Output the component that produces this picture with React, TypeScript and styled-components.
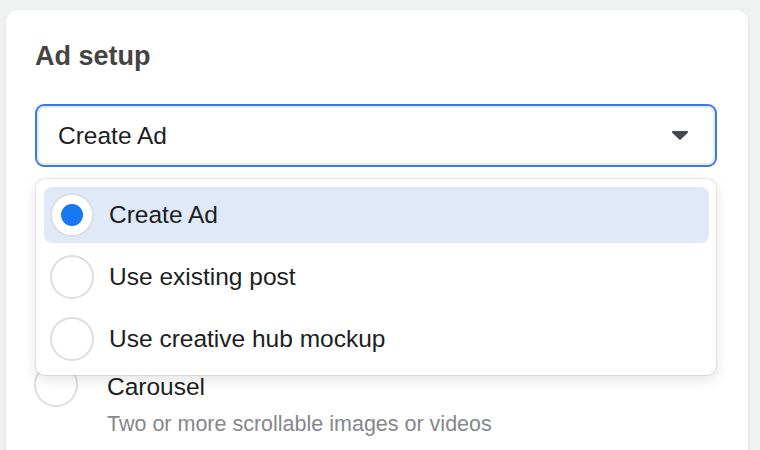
import React, { useState } from 'react';
import styled, { createGlobalStyle } from 'styled-components';

const GlobalStyle = createGlobalStyle`
    html, body {
        margin: 0;
        padding: 0;
        background: #f0f2f2;
        font-family: "Liberation Sans", Arial, sans-serif;
        overflow: hidden;
    }
`;

const SETUP_OPTIONS = ['Create Ad', 'Use existing post', 'Use creative hub mockup'];

export default function App() {
    const [selected, setSelected] = useState<string>('Create Ad');

    return (
        <>
            <GlobalStyle />
            <Page>
                <Card>
                    <Heading>Ad setup</Heading>
                    <SelectWrap>
                        <SelectBox>
                            <span>{selected}</span>
                            <Caret viewBox="0 0 16 9">
                                <path d="M1.2 0h13.6c1 0 1.5 1.2.8 1.9L8.8 8.5c-.45.45-1.15.45-1.6 0L.4 1.9C-.3 1.2.2 0 1.2 0z" />
                            </Caret>
                        </SelectBox>
                        <Menu>
                            {SETUP_OPTIONS.map((opt) => (
                                <MenuItem
                                    key={opt}
                                    active={opt === selected}
                                    onClick={() => setSelected(opt)}
                                >
                                    <Radio checked={opt === selected} />
                                    <span>{opt}</span>
                                </MenuItem>
                            ))}
                        </Menu>
                    </SelectWrap>

                    {/* format options sit under the open menu */}
                    <FormatSection>
                        <OptionRow>
                            <Radio checked={false} />
                            <OptionText>
                                <OptionTitle>Carousel</OptionTitle>
                                <OptionDesc>Two or more scrollable images or videos</OptionDesc>
                            </OptionText>
                        </OptionRow>
                    </FormatSection>
                </Card>
            </Page>
        </>
    );
}

const Page = styled.div`
    padding: 10px 12px 0 6px;
    height: 450px;
    box-sizing: border-box;
`;

const Card = styled.div`
    background: #ffffff;
    border-radius: 12px;
    box-shadow: 0 1px 3px rgba(0, 0, 0, 0.1);
    padding: 30px 31px 40px 29px;
    min-height: 500px;
    box-sizing: border-box;
`;

const Heading = styled.h2`
    margin: 0 0 32px;
    font-size: 27px;
    line-height: 32px;
    font-weight: 700;
    color: #444444;
`;

const SelectWrap = styled.div`
    position: relative;
`;

const SelectBox = styled.div`
    height: 63px;
    box-sizing: border-box;
    display: flex;
    align-items: center;
    justify-content: space-between;
    padding: 0 27px 0 21px;
    border: 2px solid #3a7be2;
    border-radius: 9px;
    box-shadow: inset 0 0 0 2px #e4ecfa;
    font-size: 24.5px;
    color: #1c1e21;
`;

const Caret = styled.svg`
    width: 16px;
    height: 9px;
    fill: #444950;
`;

const Menu = styled.div`
    position: absolute;
    top: 75px;
    left: 1px;
    right: 1px;
    z-index: 2;
    background: #ffffff;
    border-radius: 9px;
    padding: 8px 7px 8px 8px;
    display: flex;
    flex-direction: column;
    gap: 6px;
    box-shadow: 0 0 0 1px rgba(0, 0, 0, 0.08), 0 4px 14px rgba(0, 0, 0, 0.12);
`;

const MenuItem = styled.div<{ active: boolean }>`
    height: 56px;
    display: flex;
    align-items: center;
    gap: 15px;
    padding: 0 6px;
    border-radius: 8px;
    background: ${(p) => (p.active ? '#dfe9f7' : 'transparent')};
    font-size: 24.5px;
    color: #1c1e21;
    cursor: pointer;
`;

const Radio = styled.span<{ checked: boolean }>`
    flex: none;
    width: 44px;
    height: 44px;
    box-sizing: border-box;
    border-radius: 50%;
    border: 2px solid #dcdee1;
    background: #ffffff;
    display: flex;
    align-items: center;
    justify-content: center;

    &::after {
        content: '';
        width: 22px;
        height: 22px;
        border-radius: 50%;
        background: ${(p) => (p.checked ? '#1877f2' : 'transparent')};
    }
`;

const FormatSection = styled.div`
    margin-top: 196px;
    margin-left: -1px;
`;

const OptionRow = styled.div`
    display: flex;
    align-items: flex-start;
    gap: 29px;
`;

const OptionText = styled.div`
    display: flex;
    flex-direction: column;
    padding-top: 2px;
`;

const OptionTitle = styled.div`
    font-size: 24.5px;
    line-height: 44px;
    color: #1c1e21;
`;

const OptionDesc = styled.div`
    font-size: 21.5px;
    line-height: 28px;
    margin-top: 1px;
    color: #85888c;
`;
